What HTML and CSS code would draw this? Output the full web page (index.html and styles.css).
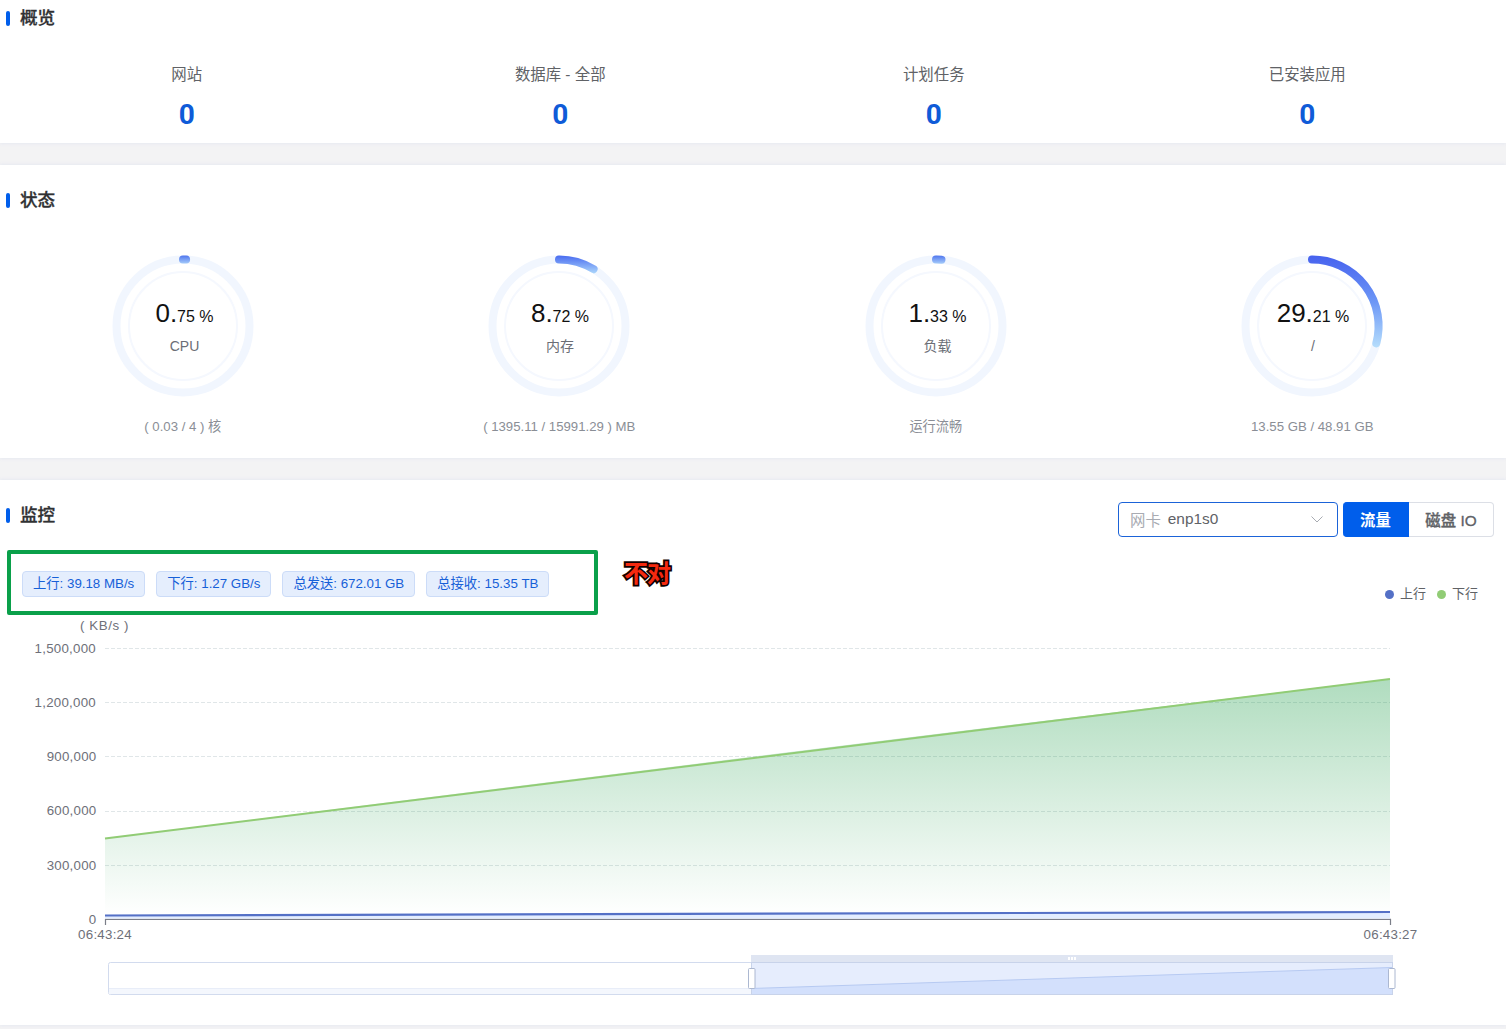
FILE: index.html
```html
<!DOCTYPE html>
<html lang="zh-CN">

<head>
    <meta charset="UTF-8">
    <meta name="viewport" content="width=device-width, initial-scale=1.0">
    <title>概览</title>
    <link rel="stylesheet" href="styles.css">
</head>

<body>
    <section class="card overview">
        <h2 class="card-title">概览</h2>
        <div class="counts">
            <div class="count"><span>网站</span><strong>0</strong></div>
            <div class="count"><span>数据库 - 全部</span><strong>0</strong></div>
            <div class="count"><span>计划任务</span><strong>0</strong></div>
            <div class="count"><span>已安装应用</span><strong>0</strong></div>
        </div>
    </section>

    <section class="card status">
        <h2 class="card-title">状态</h2>
        <div class="gauges">
            <div class="gauge">
                <svg width="150" height="150" viewBox="0 0 150 150">
                    <defs>
                        <linearGradient id="arcSmall" gradientUnits="userSpaceOnUse" x1="0" y1="4" x2="0" y2="13">
                            <stop offset="0" stop-color="#4a70ee" />
                            <stop offset="1" stop-color="#a9d0fa" />
                        </linearGradient>
                        <linearGradient id="arcMedium" gradientUnits="userSpaceOnUse" x1="0" y1="4" x2="0" y2="22">
                            <stop offset="0" stop-color="#4668f0" />
                            <stop offset="1" stop-color="#a9d4fb" />
                        </linearGradient>
                        <linearGradient id="arcLarge" gradientUnits="userSpaceOnUse" x1="0" y1="4" x2="0" y2="98">
                            <stop offset="0" stop-color="#4661ee" />
                            <stop offset="0.5" stop-color="#6d97f6" />
                            <stop offset="1" stop-color="#b8e0fc" />
                        </linearGradient>
                    </defs>
                    <circle class="track" cx="75" cy="75" r="66.5" />
                    <circle class="inner" cx="75" cy="75" r="54" />
                    <path class="arc" stroke="url(#arcSmall)" d="M75 8.5A66.5 66.5 0 0 1 78.1 8.6" />
                    <text class="value" x="76.5" y="71">0.<tspan class="small">75 %</tspan></text>
                    <text class="name" x="76.5" y="100">CPU</text>
                </svg>
                <p>( 0.03 / 4 ) 核</p>
            </div>
            <div class="gauge">
                <svg width="150" height="150" viewBox="0 0 150 150">
                    <circle class="track" cx="75" cy="75" r="66.5" />
                    <circle class="inner" cx="75" cy="75" r="54" />
                    <path class="arc" stroke="url(#arcMedium)" d="M75 8.5A66.5 66.5 0 0 1 109.6 18.2" />
                    <text class="value" x="76" y="71">8.<tspan class="small">72 %</tspan></text>
                    <text class="name" x="76" y="99.5">内存</text>
                </svg>
                <p>( 1395.11 / 15991.29 ) MB</p>
            </div>
            <div class="gauge">
                <svg width="150" height="150" viewBox="0 0 150 150">
                    <circle class="track" cx="75" cy="75" r="66.5" />
                    <circle class="inner" cx="75" cy="75" r="54" />
                    <path class="arc" stroke="url(#arcSmall)" d="M75 8.5A66.5 66.5 0 0 1 80.5 8.7" />
                    <text class="value" x="76.5" y="71">1.<tspan class="small">33 %</tspan></text>
                    <text class="name" x="76.5" y="99.5">负载</text>
                </svg>
                <p>运行流畅</p>
            </div>
            <div class="gauge">
                <svg width="150" height="150" viewBox="0 0 150 150">
                    <circle class="track" cx="75" cy="75" r="66.5" />
                    <circle class="inner" cx="75" cy="75" r="54" />
                    <path class="arc" stroke="url(#arcLarge)" d="M75 8.5A66.5 66.5 0 0 1 139.3 92.3" />
                    <text class="value" x="76" y="71">29.<tspan class="small">21 %</tspan></text>
                    <text class="name" x="76" y="100">/</text>
                </svg>
                <p>13.55 GB / 48.91 GB</p>
            </div>
        </div>
    </section>

    <section class="card monitor">
        <div class="monitor-head">
            <h2 class="card-title">监控</h2>
            <div class="controls">
                <div class="select">
                    <span class="prefix">网卡</span>
                    <span>enp1s0</span>
                    <svg class="arrow" width="14" height="14" viewBox="0 0 14 14">
                        <path d="M1.5 4.5L7 10l5.5-5.5" />
                    </svg>
                </div>
                <div class="tabs">
                    <button class="tab active">流量</button>
                    <button class="tab">磁盘 IO</button>
                </div>
            </div>
        </div>

        <div class="tags">
            <span class="tag">上行: 39.18 MB/s</span>
            <span class="tag">下行: 1.27 GB/s</span>
            <span class="tag">总发送: 672.01 GB</span>
            <span class="tag">总接收: 15.35 TB</span>
        </div>

        <!-- Marked area -->
        <div class="mark-box"></div>
        <div class="mark-text">不对</div>

        <div class="legend">
            <span class="legend-item"><i class="dot up"></i>上行</span>
            <span class="legend-item"><i class="dot down"></i>下行</span>
        </div>

        <svg class="chart" width="1506" height="400" viewBox="0 610 1506 400">
            <defs>
                <linearGradient id="downFill" gradientUnits="userSpaceOnUse" x1="0" y1="679" x2="0" y2="915">
                    <stop offset="0" stop-color="#0f963c" stop-opacity="0.33" />
                    <stop offset="1" stop-color="#0f963c" stop-opacity="0" />
                </linearGradient>
            </defs>
            <text class="unit" x="80" y="630">( KB/s )</text>
            <g class="y-labels">
                <text x="96" y="653">1,500,000</text>
                <text x="96" y="707">1,200,000</text>
                <text x="96.5" y="761">900,000</text>
                <text x="96.5" y="815">600,000</text>
                <text x="96.5" y="870">300,000</text>
                <text x="96.5" y="924">0</text>
            </g>
            <path class="grid" d="M105 648.5H1390M105 702.5H1390M105 756.5H1390M105 811.5H1390M105 865.5H1390" />
            <path class="axis" d="M105 919.3H1391M105.5 919V925M1390.5 919V925" />
            <path fill="url(#downFill)" d="M105 838.5Q748 756 1390 679V919H105Z" />
            <path class="line-down" d="M105 838.5Q748 756 1390 679" />
            <path fill="#e3edff" d="M105 915.5L1390 912V918.5H105Z" />
            <path class="line-up" d="M105 915.5L1390 912" />
            <text class="x-label" x="105" y="939">06:43:24</text>
            <text class="x-label" x="1390.5" y="939">06:43:27</text>

            <!-- Data zoom slider -->
            <rect class="zoom-frame" x="108.5" y="962.5" width="1284" height="32" rx="2" />
            <path fill="#f4f7fd" d="M109 989H751V994H109Z" />
            <path class="zoom-shadow" d="M109 988.5H751" />
            <rect fill="#dfe5f2" x="751" y="955" width="642" height="8" />
            <rect fill="#e6edfd" x="751" y="963" width="641" height="31" />
            <path fill="#d3e0fc" d="M751 988.5L1392 967.5V994H751Z" />
            <path class="zoom-line" d="M751 988.5L1392 967.5" />
            <path class="zoom-edge" d="M751 962.5H1393M751 994.5H1393" />
            <path class="zoom-edge" d="M751.5 963V995M1392.5 963V995" />
            <rect class="handle" x="748.5" y="968.5" width="6.5" height="20" rx="1" />
            <rect class="handle" x="1388.5" y="968.5" width="6.5" height="20" rx="1" />
            <path fill="#fff" d="M1068 957h2v3h-2zM1071 957h2v3h-2zM1074 957h2v3h-2z" />
        </svg>
    </section>
</body>

</html>
```
FILE: styles.css
```css
* {
    box-sizing: border-box;
}

body {
    margin: 0;
    height: 1029px;
    overflow: hidden;
    background-color: #f3f3f4;
    font-family: "Liberation Sans", "Noto Sans CJK SC", sans-serif;
    font-size: 15.4px;
    color: #606266;
}

.card {
    position: relative;
    background-color: #fff;
    margin-bottom: 22px;
    box-shadow: 0 0 4px #dfe3f0;
}

.overview {
    height: 143px;
    padding-top: 6px;
}

.status {
    height: 293px;
    padding-top: 23px;
}

.monitor {
    height: 545px;
    padding-top: 22px;
}

.card-title {
    display: flex;
    align-items: center;
    gap: 10px;
    margin: 0;
    padding-left: 6px;
    height: 24px;
    font-size: 17.6px;
    font-weight: 500;
    line-height: 24px;
    color: #303133;
    -webkit-text-stroke: 0.3px #303133;
}

.card-title::before {
    content: "";
    width: 4px;
    height: 15px;
    margin-top: 1px;
    border-radius: 2px;
    background-color: #005eeb;
}

/* Overview */
.counts {
    display: grid;
    grid-template-columns: repeat(4, 1fr);
    padding: 33px 12px 0 0;
}

.count {
    display: flex;
    flex-direction: column;
    align-items: center;
    line-height: 24px;
}

.count strong {
    margin-top: 12px;
    font-family: Roboto, sans-serif;
    font-size: 28px;
    line-height: 32px;
    color: #0f5bd8;
}

/* Status */
.gauges {
    display: grid;
    grid-template-columns: repeat(4, 1fr);
    width: 1506px;
    margin: 39px 0 0 -5.5px;
}

.gauge {
    display: flex;
    flex-direction: column;
    align-items: center;
}

.gauge p {
    margin: 16px 0 0;
    font-size: 13.2px;
    line-height: 20px;
    color: #8a8e96;
}

.track {
    fill: none;
    stroke: #f1f6fe;
    stroke-width: 8;
}

.inner {
    fill: none;
    stroke: #f5f8fe;
    stroke-width: 2;
}

.arc {
    fill: none;
    stroke-width: 8;
    stroke-linecap: round;
}

.value {
    font-size: 26px;
    fill: #111;
    text-anchor: middle;
}

.value .small {
    font-size: 16px;
}

.name {
    font-size: 14px;
    fill: #6b6e76;
    text-anchor: middle;
}

/* Monitor */
.monitor-head {
    display: flex;
    justify-content: space-between;
    height: 35px;
    padding-right: 12px;
}

.monitor-head .card-title {
    margin-top: 1px;
}

.controls {
    display: flex;
    gap: 5px;
}

.select {
    display: flex;
    align-items: center;
    gap: 7px;
    width: 220px;
    height: 35px;
    padding: 0 13px 2px 11px;
    border: 1px solid #1b63d8;
    border-radius: 4px;
}

.prefix {
    color: #a8abb2;
}

.arrow {
    margin-left: auto;
    fill: none;
    stroke: #a8abb2;
}

.tabs {
    display: flex;
}

.tab {
    width: 85px;
    padding: 0 0 2px;
    border: 1px solid #dcdfe6;
    border-left: none;
    border-radius: 0 4px 4px 0;
    background: #fff;
    font-family: inherit;
    font-size: 15.4px;
    font-weight: 500;
    color: #606266;
    -webkit-text-stroke: 0.3px #606266;
}

.tab.active {
    width: 66px;
    border-color: #005eeb;
    border-radius: 4px 0 0 4px;
    background: #005eeb;
    font-weight: 700;
    color: #fff;
    -webkit-text-stroke: 0;
}

.tags {
    display: flex;
    gap: 11px;
    margin: 34px 0 0 22px;
}

.tag {
    height: 26px;
    padding: 0 10px;
    border: 1px solid #ccdcf8;
    border-radius: 4px;
    background-color: #e5eefd;
    font-size: 13.3px;
    line-height: 23px;
    color: #1660d8;
}

.mark-box {
    position: absolute;
    left: 7px;
    top: 70px;
    width: 591px;
    height: 65px;
    border: 4px solid #0aa04a;
    border-radius: 2px;
}

.mark-text {
    position: absolute;
    left: 624px;
    top: 79px;
    font-size: 24px;
    font-weight: 700;
    line-height: 30px;
    letter-spacing: -1px;
    color: #f5290f;
    -webkit-text-stroke: 3.5px #100;
    paint-order: stroke fill;
}

.legend {
    display: flex;
    justify-content: flex-end;
    gap: 11px;
    height: 20px;
    margin-top: -13px;
    padding-right: 28px;
    font-size: 13px;
    line-height: 20px;
}

.legend-item {
    display: flex;
    align-items: center;
    gap: 6px;
}

.dot {
    width: 9px;
    height: 9px;
    border-radius: 50%;
}

.up {
    background-color: #5470c6;
}

.down {
    background-color: #91cc75;
}

.chart {
    display: block;
    margin-top: 6px;
}

.chart text {
    font-size: 13.3px;
    letter-spacing: 0.25px;
    fill: #6e7079;
}

.chart .unit {
    letter-spacing: 0.6px;
}

.y-labels {
    text-anchor: end;
}

.x-label {
    text-anchor: middle;
}

.grid {
    stroke: #e0e6e8;
    stroke-dasharray: 4 2;
}

.axis {
    fill: none;
    stroke: #7b7e88;
    stroke-width: 1.2;
}

.line-down {
    fill: none;
    stroke: #91cc75;
    stroke-width: 2;
}

.line-up {
    fill: none;
    stroke: #5470c6;
    stroke-width: 2.2;
}

.zoom-frame {
    fill: #fff;
    stroke: #d2dbee;
}

.zoom-shadow {
    stroke: #e8edf8;
}

.zoom-line {
    stroke: #b7caf2;
}

.zoom-edge {
    stroke: #c8d3ea;
}

.handle {
    fill: #fff;
    stroke: #acb8d1;
}
```
